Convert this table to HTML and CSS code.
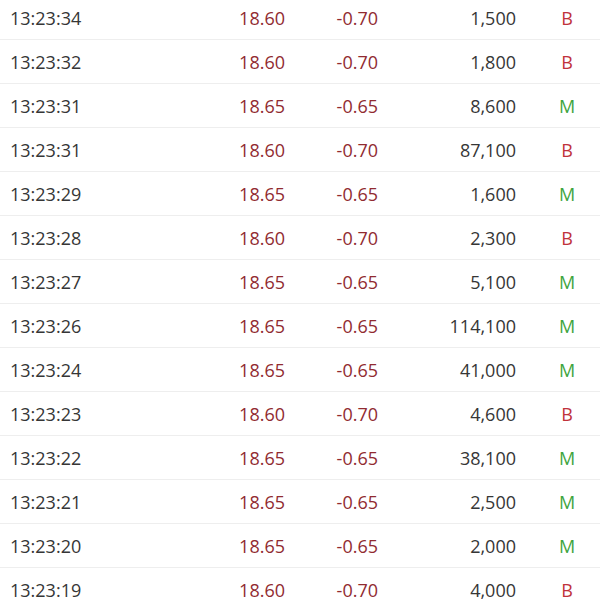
FILE: index.html
```html
<!DOCTYPE html>
<html>
<head>
<meta charset="utf-8">
<link rel="stylesheet" href="styles.css">
</head>
<body>
<div class="list">
  <div class="row"><span class="time">13:23:34</span><span class="price">18.60</span><span class="chg">-0.70</span><span class="vol">1,500</span><span class="side b">B</span></div>
  <div class="row"><span class="time">13:23:32</span><span class="price">18.60</span><span class="chg">-0.70</span><span class="vol">1,800</span><span class="side b">B</span></div>
  <div class="row"><span class="time">13:23:31</span><span class="price">18.65</span><span class="chg">-0.65</span><span class="vol">8,600</span><span class="side m">M</span></div>
  <div class="row"><span class="time">13:23:31</span><span class="price">18.60</span><span class="chg">-0.70</span><span class="vol">87,100</span><span class="side b">B</span></div>
  <div class="row"><span class="time">13:23:29</span><span class="price">18.65</span><span class="chg">-0.65</span><span class="vol">1,600</span><span class="side m">M</span></div>
  <div class="row"><span class="time">13:23:28</span><span class="price">18.60</span><span class="chg">-0.70</span><span class="vol">2,300</span><span class="side b">B</span></div>
  <div class="row"><span class="time">13:23:27</span><span class="price">18.65</span><span class="chg">-0.65</span><span class="vol">5,100</span><span class="side m">M</span></div>
  <div class="row"><span class="time">13:23:26</span><span class="price">18.65</span><span class="chg">-0.65</span><span class="vol">114,100</span><span class="side m">M</span></div>
  <div class="row"><span class="time">13:23:24</span><span class="price">18.65</span><span class="chg">-0.65</span><span class="vol">41,000</span><span class="side m">M</span></div>
  <div class="row"><span class="time">13:23:23</span><span class="price">18.60</span><span class="chg">-0.70</span><span class="vol">4,600</span><span class="side b">B</span></div>
  <div class="row"><span class="time">13:23:22</span><span class="price">18.65</span><span class="chg">-0.65</span><span class="vol">38,100</span><span class="side m">M</span></div>
  <div class="row"><span class="time">13:23:21</span><span class="price">18.65</span><span class="chg">-0.65</span><span class="vol">2,500</span><span class="side m">M</span></div>
  <div class="row"><span class="time">13:23:20</span><span class="price">18.65</span><span class="chg">-0.65</span><span class="vol">2,000</span><span class="side m">M</span></div>
  <div class="row"><span class="time">13:23:19</span><span class="price">18.60</span><span class="chg">-0.70</span><span class="vol">4,000</span><span class="side b">B</span></div>
</div>
</body>
</html>
```

FILE: styles.css
```css
html, body {
  margin: 0;
  padding: 0;
  background: #ffffff;
  overflow: hidden;
}
body {
  font-family: "Open Sans", "Noto Sans", sans-serif;
  font-size: 18px;
  color: #333333;
}
.list {
  margin-top: -4px;
}
.row {
  display: grid;
  grid-template-columns: 190px 85px 93px 138px 1fr;
  align-items: center;
  height: 43px;
  padding-left: 10px;
  border-bottom: 1px solid #eeeeee;
}
.time {
  color: #363636;
}
.price, .chg {
  color: #912b31;
  text-align: right;
}
.vol {
  color: #363636;
  text-align: right;
}
.side {
  text-align: center;
  padding-left: 18px;
}
.side.b {
  color: #c0323b;
}
.side.m {
  color: #3ea540;
}
```
